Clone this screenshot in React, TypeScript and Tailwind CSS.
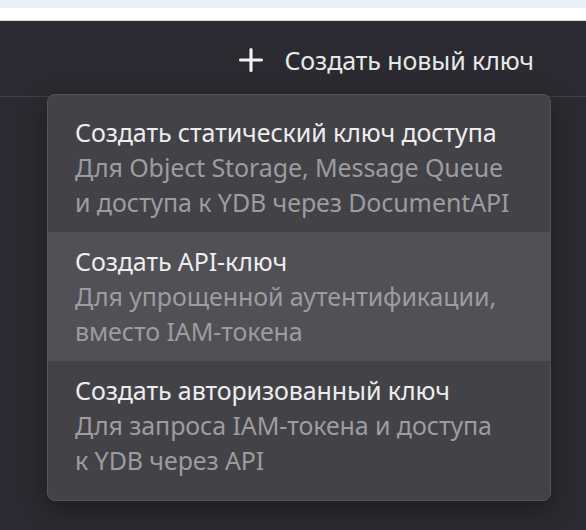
import { Plus } from "lucide-react";

const items = [
  {
    title: "Создать статический ключ доступа",
    lines: ["Для Object Storage, Message Queue", "и доступа к YDB через DocumentAPI"],
  },
  {
    title: "Создать API-ключ",
    lines: ["Для упрощенной аутентификации,", "вместо IAM-токена"],
    active: true,
  },
  {
    title: "Создать авторизованный ключ",
    lines: ["Для запроса IAM-токена и доступа", "к YDB через API"],
  },
];

export default function App() {
  return (
    <div
      className="w-[586px] h-[530px] overflow-hidden bg-[#2b2a30] flex flex-col"
      style={{ fontFamily: '"Noto Sans", "Open Sans", sans-serif' }}
    >
      <div className="h-[8px] bg-[#e9eef7] shrink-0" />
      <div className="h-[12px] bg-white shrink-0" />
      <div className="h-[1px] bg-[#d6d6d6] shrink-0" />

      {/* header */}
      <div className="relative h-[76px] shrink-0 border-b border-[#414046] flex items-center justify-end pr-[52px]">
        <button className="mt-[3px] flex items-center gap-[15px] text-[#e8e8ea] text-[25px] leading-none">
          <Plus size={36} strokeWidth={2.1} className="text-[#f2f2f2]" />
          <span className="tracking-[-0.1px]">Создать новый ключ</span>
        </button>

        {/* dropdown menu */}
        <div className="absolute left-[47px] top-[73px] w-[504px] rounded-[8px] border border-[#55545a] bg-[#434247] pt-[8px] pb-[10px] shadow-[0_8px_24px_rgba(0,0,0,0.35)]">
          {items.map((it) => (
            <div
              key={it.title}
              className={`px-[27px] py-[12px] leading-[35px] text-[25px] ${it.active ? "bg-[#505055]" : ""}`}
            >
              <div className="text-[#ededef] tracking-[-0.1px]">{it.title}</div>
              {it.lines.map((l) => (
                <div key={l} className="text-[#9d9ca1] tracking-[-0.1px]">
                  {l}
                </div>
              ))}
            </div>
          ))}
        </div>
      </div>
    </div>
  );
}
